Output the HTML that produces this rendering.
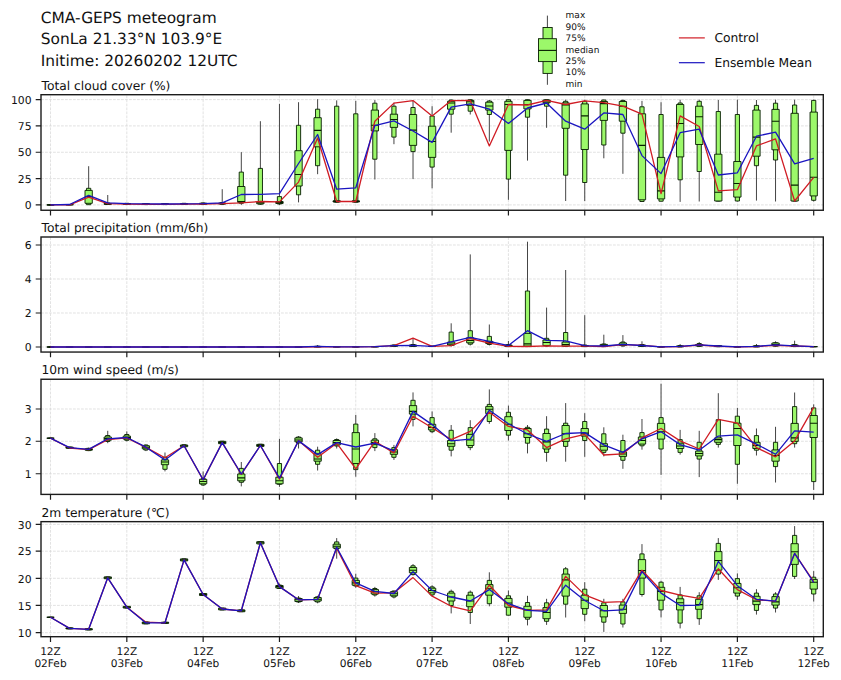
<!DOCTYPE html>
<html lang="en"><head><meta charset="utf-8"><title>CMA-GEPS meteogram</title>
<style>html,body{margin:0;padding:0;background:#fff}svg{display:block}text{font-family:"DejaVu Sans","Liberation Sans",sans-serif;fill:#111;text-rendering:geometricPrecision}.g{stroke:#d6d6d6;stroke-width:.7;stroke-dasharray:2.8 1.2;fill:none}.tk{stroke:#1c1c1c;stroke-width:1.2}.fr{fill:none;stroke:#1c1c1c;stroke-width:1.4}.w{stroke:#454545;stroke-width:1}.b{fill:#9cf86a;stroke:#061c00;stroke-width:.9}.m{stroke:#061c00;stroke-width:1.1}.r{fill:none;stroke:#d01c24;stroke-width:1.3;stroke-linejoin:round}.u{fill:none;stroke:#1a14c0;stroke-width:1.3;stroke-linejoin:round}.yt{font-size:10.8px;text-anchor:end}.xt{font-size:10.6px;text-anchor:middle}.ti{font-size:12.27px}.st{font-size:15.4px}.lg{font-size:12.3px}.bl{font-size:9px}</style></head><body>
<svg width="841" height="680" viewBox="0 0 841 680">
<rect width="841" height="680" fill="#fff"/>
<text class="st" x="40.8" y="23">CMA-GEPS meteogram</text>
<text class="st" x="40.8" y="44">SonLa 21.33°N 103.9°E</text>
<text class="st" x="40.8" y="65.5">Initime: 20260202 12UTC</text>
<line class="w" x1="547.4" y1="15.6" x2="547.4" y2="84.8"/>
<rect class="b" x="543" y="27.5" width="9.2" height="45.9"/>
<rect class="b" x="538.5" y="38.7" width="17.9" height="22.9"/>
<line class="m" x1="538.5" y1="50.4" x2="556.4" y2="50.4"/>
<text class="bl" x="565.6" y="18.3">max</text>
<text class="bl" x="565.6" y="29.72">90%</text>
<text class="bl" x="565.6" y="41.14">75%</text>
<text class="bl" x="565.6" y="52.56">median</text>
<text class="bl" x="565.6" y="63.98">25%</text>
<text class="bl" x="565.6" y="75.4">10%</text>
<text class="bl" x="565.6" y="86.82">min</text>
<line x1="678.9" y1="37.9" x2="704.8" y2="37.9" stroke="#d01c24" stroke-width="1.2"/>
<line x1="678.9" y1="62.7" x2="704.8" y2="62.7" stroke="#1a14c0" stroke-width="1.2"/>
<text class="lg" x="714.4" y="42.2">Control</text>
<text class="lg" x="714.4" y="67">Ensemble Mean</text>
<g>
<text class="ti" x="41.5" y="89.8">Total cloud cover (%)</text>
<path class="g" d="M50.5 210.25V94.7M126.82 210.25V94.7M203.14 210.25V94.7M279.46 210.25V94.7M355.78 210.25V94.7M432.1 210.25V94.7M508.42 210.25V94.7M584.74 210.25V94.7M661.06 210.25V94.7M737.38 210.25V94.7M813.7 210.25V94.7M41 204.9H823.3M41 178.6H823.3M41 152.25H823.3M41 125.9H823.3M41 99.6H823.3"/>
<path class="w" d="M50.5 204.9V204.9M69.58 204.5V204.9M88.66 166.2V204.9M107.74 195V204.9M126.82 203V204.6M145.9 203.3V204.8M164.98 203.3V204.8M184.06 203V204.6M203.14 202.6V204.6M222.22 189.2V204.7M241.3 152.1V204.9M260.38 121.2V204.9M279.46 103.9V204.9M298.54 102.2V202.4M317.62 99.2V174.2M336.7 100.4V202.4M355.78 100.9V202.4M374.86 100.1V179.5M393.94 102.7V144.2M413.02 101V179.1M432.1 106.2V188.3M451.18 99.7V132.7M470.26 99.6V114.5M489.34 100V141.5M508.42 99.6V199.8M527.5 99.6V160.6M546.58 99.6V127.8M565.66 99.7V201M584.74 99.7V201M603.82 99.7V158.3M622.9 99.7V173.8M641.98 100.9V201.6M661.06 102.2V201.5M680.14 99.7V201.9M699.22 99.7V201.5M718.3 100V201.2M737.38 99.7V201.5M756.46 100V200.6M775.54 99.7V201.5M794.62 99.7V201.3M813.7 99.7V201.5"/>
<path class="b" d="M48.4 204.9H52.6V204.9H48.4ZM67.48 204.5H71.68V204.9H67.48ZM86.56 188.3H90.76V204.7H86.56ZM105.64 203H109.84V204.5H105.64ZM124.72 203.3H128.92V204.4H124.72ZM143.8 203.6H148V204.6H143.8ZM162.88 203.6H167.08V204.6H162.88ZM181.96 203.3H186.16V204.4H181.96ZM201.04 203H205.24V204.4H201.04ZM220.12 202.6H224.32V204.3H220.12ZM239.2 172.1H243.4V203.3H239.2ZM258.28 168.4H262.48V204.2H258.28ZM277.36 196.6H281.56V204H277.36ZM296.44 125.3H300.64V194.8H296.44ZM315.52 109.2H319.72V165.7H315.52ZM334.6 106.2H338.8V202.2H334.6ZM353.68 113.8H357.88V202.2H353.68ZM372.76 103.2H376.96V159.2H372.76ZM391.84 106.2H396.04V137.1H391.84ZM410.92 107.5H415.12V151.6H410.92ZM430 116H434.2V167.1H430ZM449.08 100H453.28V114.2H449.08ZM468.16 99.7H472.36V111.2H468.16ZM487.24 101H491.44V114.5H487.24ZM506.32 99.7H510.52V179.1H506.32ZM525.4 99.7H529.6V117.2H525.4ZM544.48 99.7H548.68V106.2H544.48ZM563.56 101.3H567.76V175.2H563.56ZM582.64 101.3H586.84V182.5H582.64ZM601.72 100H605.92V145H601.72ZM620.8 100.4H625V133.2H620.8ZM639.88 106.8H644.08V201.5H639.88ZM658.96 114.5H663.16V201.2H658.96ZM678.04 103H682.24V179.8H678.04ZM697.12 101.3H701.32V171.5H697.12ZM716.2 111.5H720.4V201.1H716.2ZM735.28 114.5H739.48V201H735.28ZM754.36 105.4H758.56V165.7H754.36ZM773.44 103.2H777.64V160H773.44ZM792.52 105H796.72V201.1H792.52ZM811.6 100.4H815.8V200.3H811.6Z"/>
<path class="b" d="M46.85 204.9H54.15V204.9H46.85ZM65.93 204.5H73.23V204.9H65.93ZM85.01 190.4H92.31V203.3H85.01ZM104.09 203.4H111.39V204.3H104.09ZM123.17 203.5H130.47V204.3H123.17ZM142.25 203.8H149.55V204.5H142.25ZM161.33 203.8H168.63V204.5H161.33ZM180.41 203.5H187.71V204.3H180.41ZM199.49 203.2H206.79V204.2H199.49ZM218.57 203H225.87V204H218.57ZM237.65 186.5H244.95V202.4H237.65ZM256.73 201.9H264.03V203.8H256.73ZM275.81 201.5H283.11V203.5H275.81ZM294.89 150.7H302.19V186H294.89ZM313.97 117.7H321.27V146.8H313.97ZM333.05 200.8H340.35V202H333.05ZM352.13 200.8H359.43V202H352.13ZM371.21 110.1H378.51V130.9H371.21ZM390.29 114.2H397.59V127.4H390.29ZM409.37 114.5H416.67V145.4H409.37ZM428.45 126.2H435.75V157.4H428.45ZM447.53 101.3H454.83V109.2H447.53ZM466.61 100.4H473.91V105.4H466.61ZM485.69 102.2H492.99V110.1H485.69ZM504.77 101.3H512.07V150.4H504.77ZM523.85 100.4H531.15V108.9H523.85ZM542.93 100H550.23V102.7H542.93ZM562.01 102.9H569.31V128.3H562.01ZM581.09 103.9H588.39V149.5H581.09ZM600.17 101.5H607.47V120.4H600.17ZM619.25 101.5H626.55V121.2H619.25ZM638.33 113.8H645.63V199.8H638.33ZM657.41 157.4H664.71V198.9H657.41ZM676.49 104.5H683.79V156.9H676.49ZM695.57 106.2H702.87V144.5H695.57ZM714.65 154.2H721.95V201H714.65ZM733.73 161.5H741.03V197.1H733.73ZM752.81 110.1H760.11V156.2H752.81ZM771.89 109.4H779.19V149.8H771.89ZM790.97 113.3H798.27V201H790.97ZM810.05 112.1H817.35V195.9H810.05Z"/>
<path class="m" d="M46.85 204.9H54.15M65.93 204.7H73.23M85.01 196.5H92.31M104.09 203.9H111.39M123.17 203.9H130.47M142.25 204.1H149.55M161.33 204.1H168.63M180.41 203.9H187.71M199.49 203.7H206.79M218.57 203.5H225.87M237.65 201.5H244.95M256.73 202.8H264.03M275.81 202.5H283.11M294.89 174.5H302.19M313.97 130.4H321.27M333.05 201.4H340.35M352.13 201.4H359.43M371.21 125.3H378.51M390.29 119.5H397.59M409.37 130.1H416.67M428.45 141.5H435.75M447.53 103H454.83M466.61 101.8H473.91M485.69 106H492.99M504.77 104.5H512.07M523.85 104.5H531.15M542.93 101H550.23M562.01 104.9H569.31M581.09 115.9H588.39M600.17 103.6H607.47M619.25 106.2H626.55M638.33 145.4H645.63M657.41 190.9H664.71M676.49 123.5H683.79M695.57 116.8H702.87M714.65 192.2H721.95M733.73 183.5H741.03M752.81 137.1H760.11M771.89 121.2H779.19M790.97 185.1H798.27M810.05 177.3H817.35"/>
<polyline class="r" points="50.5,204.9 69.58,204.8 88.66,197.1 107.74,203.6 126.82,204.2 145.9,204.4 164.98,204.4 184.06,204.2 203.14,204 222.22,203.6 241.3,202.8 260.38,201.5 279.46,201.9 298.54,182.1 317.62,138 336.7,201.5 355.78,201.5 374.86,121.2 393.94,103.1 413.02,100.6 432.1,116 451.18,100.6 470.26,100.4 489.34,145.9 508.42,104.5 527.5,105 546.58,100.4 565.66,104.5 584.74,100.9 603.82,102.7 622.9,106.2 641.98,114.2 661.06,193.6 680.14,115.9 699.22,126.5 718.3,190.9 737.38,189.7 756.46,145.9 775.54,138.9 794.62,201 813.7,177.3"/>
<polyline class="u" points="50.5,204.9 69.58,204.5 88.66,195.3 107.74,202.8 126.82,203.6 145.9,203.9 164.98,204 184.06,203.8 203.14,203.6 222.22,202.8 241.3,194.5 260.38,194.3 279.46,193.6 298.54,163.5 317.62,134.5 336.7,189.2 355.78,187.8 374.86,125.6 393.94,120.9 413.02,131 432.1,142.4 451.18,107.1 470.26,103.9 489.34,109.2 508.42,123.4 527.5,108 546.58,103 565.66,121.2 584.74,129.2 603.82,112.9 622.9,114.5 641.98,155.6 661.06,173.6 680.14,132.7 699.22,129.2 718.3,175 737.38,172.8 756.46,136.2 775.54,132.2 794.62,163.9 813.7,158.3"/>
<rect class="fr" x="41" y="94.7" width="782.3" height="115.55"/>
<path class="tk" d="M50.5 210.25v5.3M126.82 210.25v5.3M203.14 210.25v5.3M279.46 210.25v5.3M355.78 210.25v5.3M432.1 210.25v5.3M508.42 210.25v5.3M584.74 210.25v5.3M661.06 210.25v5.3M737.38 210.25v5.3M813.7 210.25v5.3M41 204.9h-5.3M41 178.6h-5.3M41 152.25h-5.3M41 125.9h-5.3M41 99.6h-5.3"/>
<text class="yt" x="31.6" y="209.1">0</text>
<text class="yt" x="31.6" y="182.8">25</text>
<text class="yt" x="31.6" y="156.45">50</text>
<text class="yt" x="31.6" y="130.1">75</text>
<text class="yt" x="31.6" y="103.8">100</text>
</g>
<g>
<text class="ti" x="41.5" y="232.1">Total precipitation (mm/6h)</text>
<path class="g" d="M50.5 352.05V237M126.82 352.05V237M203.14 352.05V237M279.46 352.05V237M355.78 352.05V237M432.1 352.05V237M508.42 352.05V237M584.74 352.05V237M661.06 352.05V237M737.38 352.05V237M813.7 352.05V237M41 347H823.3M41 313H823.3M41 279H823.3M41 245H823.3"/>
<path class="w" d="M50.5 347V347M69.58 347V347M88.66 347V347M107.74 347V347M126.82 347V347M145.9 347V347M164.98 347V347M184.06 347V347M203.14 347V347M222.22 347V347M241.3 347V347M260.38 347V347M279.46 347V347M298.54 347V347M317.62 345V347M336.7 346.8V346.8M355.78 346.8V346.8M374.86 346.7V346.7M393.94 344.5V346.6M413.02 338.5V346.6M432.1 346.4V346.4M451.18 323.3V346.5M470.26 254.4V345.5M489.34 324.5V345.5M508.42 340.9V346.8M527.5 241.7V346.5M546.58 307.6V346.5M565.66 270V346.5M584.74 315.2V346.8M603.82 334.7V346.8M622.9 335.1V346.5M641.98 341.3V346.6M661.06 346.8V346.8M680.14 344.1V347M699.22 342.1V346.6M718.3 345V346.9M737.38 346.8V346.8M756.46 344V347M775.54 341.3V346.6M794.62 340.7V346.8M813.7 346.6V346.6"/>
<path class="b" d="M48.4 347H52.6V347H48.4ZM67.48 347H71.68V347H67.48ZM86.56 347H90.76V347H86.56ZM105.64 347H109.84V347H105.64ZM124.72 347H128.92V347H124.72ZM143.8 347H148V347H143.8ZM162.88 347H167.08V347H162.88ZM181.96 347H186.16V347H181.96ZM201.04 347H205.24V347H201.04ZM220.12 347H224.32V347H220.12ZM239.2 347H243.4V347H239.2ZM258.28 347H262.48V347H258.28ZM277.36 347H281.56V347H277.36ZM296.44 347H300.64V347H296.44ZM315.52 346.2H319.72V346.9H315.52ZM334.6 346.8H338.8V346.8H334.6ZM353.68 346.8H357.88V346.8H353.68ZM372.76 346.7H376.96V346.7H372.76ZM391.84 345H396.04V346.4H391.84ZM410.92 344.5H415.12V346.4H410.92ZM430 346.4H434.2V346.4H430ZM449.08 332.1H453.28V345.5H449.08ZM468.16 330.7H472.36V344.2H468.16ZM487.24 336.4H491.44V344.5H487.24ZM506.32 344.6H510.52V346.6H506.32ZM525.4 291H529.6V346.3H525.4ZM544.48 338.3H548.68V346H544.48ZM563.56 332.5H567.76V346.3H563.56ZM582.64 345H586.84V346.6H582.64ZM601.72 344H605.92V346.6H601.72ZM620.8 342H625V346H620.8ZM639.88 344.6H644.08V346.4H639.88ZM658.96 346.8H663.16V346.8H658.96ZM678.04 345.7H682.24V346.9H678.04ZM697.12 343.5H701.32V346.3H697.12ZM716.2 345.6H720.4V346.7H716.2ZM735.28 346.8H739.48V346.8H735.28ZM754.36 345.7H758.56V346.9H754.36ZM773.44 342.7H777.64V346.2H773.44ZM792.52 344.6H796.72V346.6H792.52ZM811.6 346.6H815.8V346.6H811.6Z"/>
<path class="b" d="M46.85 347H54.15V347H46.85ZM65.93 347H73.23V347H65.93ZM85.01 347H92.31V347H85.01ZM104.09 347H111.39V347H104.09ZM123.17 347H130.47V347H123.17ZM142.25 347H149.55V347H142.25ZM161.33 347H168.63V347H161.33ZM180.41 347H187.71V347H180.41ZM199.49 347H206.79V347H199.49ZM218.57 347H225.87V347H218.57ZM237.65 347H244.95V347H237.65ZM256.73 347H264.03V347H256.73ZM275.81 347H283.11V347H275.81ZM294.89 347H302.19V347H294.89ZM313.97 346.4H321.27V346.8H313.97ZM333.05 346.8H340.35V346.8H333.05ZM352.13 346.8H359.43V346.8H352.13ZM371.21 346.7H378.51V346.7H371.21ZM390.29 345.3H397.59V346.3H390.29ZM409.37 345H416.67V346.3H409.37ZM428.45 346.4H435.75V346.4H428.45ZM447.53 342.1H454.83V345H447.53ZM466.61 337.8H473.91V342.8H466.61ZM485.69 341.4H492.99V343.5H485.69ZM504.77 345H512.07V346.5H504.77ZM523.85 333.4H531.15V346.1H523.85ZM542.93 340H550.23V345.6H542.93ZM562.01 342.1H569.31V346.1H562.01ZM581.09 345.5H588.39V346.5H581.09ZM600.17 344.4H607.47V346.5H600.17ZM619.25 343H626.55V345.5H619.25ZM638.33 345H645.63V346.3H638.33ZM657.41 346.8H664.71V346.8H657.41ZM676.49 346H683.79V346.8H676.49ZM695.57 344.5H702.87V346H695.57ZM714.65 345.8H721.95V346.6H714.65ZM733.73 346.8H741.03V346.8H733.73ZM752.81 346H760.11V346.8H752.81ZM771.89 343H779.19V345.8H771.89ZM790.97 345H798.27V346.5H790.97ZM810.05 346.6H817.35V346.6H810.05Z"/>
<path class="m" d="M46.85 347H54.15M65.93 347H73.23M85.01 347H92.31M104.09 347H111.39M123.17 347H130.47M142.25 347H149.55M161.33 347H168.63M180.41 347H187.71M199.49 347H206.79M218.57 347H225.87M237.65 347H244.95M256.73 347H264.03M275.81 347H283.11M294.89 347H302.19M313.97 346.6H321.27M333.05 346.8H340.35M352.13 346.8H359.43M371.21 346.7H378.51M390.29 345.8H397.59M409.37 345.6H416.67M428.45 346.4H435.75M447.53 344H454.83M466.61 340.5H473.91M485.69 342.5H492.99M504.77 345.8H512.07M523.85 343.9H531.15M542.93 342.5H550.23M562.01 344.5H569.31M581.09 346H588.39M600.17 345.5H607.47M619.25 344.5H626.55M638.33 345.7H645.63M657.41 346.8H664.71M676.49 346.4H683.79M695.57 345.3H702.87M714.65 346.2H721.95M733.73 346.8H741.03M752.81 346.4H760.11M771.89 344.5H779.19M790.97 345.8H798.27M810.05 346.6H817.35"/>
<polyline class="r" points="50.5,347 69.58,347 88.66,347 107.74,347 126.82,347 145.9,347 164.98,347 184.06,347 203.14,347 222.22,347 241.3,347 260.38,347 279.46,347 298.54,347 317.62,346.8 336.7,346.8 355.78,346.8 374.86,346.7 393.94,345.7 413.02,338.1 432.1,346.4 451.18,345.7 470.26,338.5 489.34,343.2 508.42,346.3 527.5,346.5 546.58,345.8 565.66,346.1 584.74,346.1 603.82,346.5 622.9,344.6 641.98,345.3 661.06,346.8 680.14,346.6 699.22,345 718.3,346.3 737.38,346.8 756.46,346.6 775.54,345.3 794.62,346 813.7,346.6"/>
<polyline class="u" points="50.5,347 69.58,347 88.66,347 107.74,347 126.82,347 145.9,347 164.98,347 184.06,347 203.14,347 222.22,347 241.3,347 260.38,347 279.46,347 298.54,347 317.62,346.3 336.7,346.8 355.78,346.8 374.86,346.7 393.94,345.7 413.02,345.4 432.1,346.4 451.18,341.8 470.26,337.4 489.34,341.4 508.42,345.6 527.5,330.7 546.58,340.4 565.66,340.9 584.74,345.6 603.82,346 622.9,344.4 641.98,345.5 661.06,346.8 680.14,346.3 699.22,344.9 718.3,346 737.38,346.8 756.46,346.3 775.54,344.9 794.62,345.8 813.7,346.6"/>
<rect class="fr" x="41" y="237" width="782.3" height="115.05"/>
<path class="tk" d="M50.5 352.05v5.3M126.82 352.05v5.3M203.14 352.05v5.3M279.46 352.05v5.3M355.78 352.05v5.3M432.1 352.05v5.3M508.42 352.05v5.3M584.74 352.05v5.3M661.06 352.05v5.3M737.38 352.05v5.3M813.7 352.05v5.3M41 347h-5.3M41 313h-5.3M41 279h-5.3M41 245h-5.3"/>
<text class="yt" x="31.6" y="351.2">0</text>
<text class="yt" x="31.6" y="317.2">2</text>
<text class="yt" x="31.6" y="283.2">4</text>
<text class="yt" x="31.6" y="249.2">6</text>
</g>
<g>
<text class="ti" x="41.5" y="374.35">10m wind speed (m/s)</text>
<path class="g" d="M50.5 494.4V379.25M126.82 494.4V379.25M203.14 494.4V379.25M279.46 494.4V379.25M355.78 494.4V379.25M432.1 494.4V379.25M508.42 494.4V379.25M584.74 494.4V379.25M661.06 494.4V379.25M737.38 494.4V379.25M813.7 494.4V379.25M41 473.75H823.3M41 441.25H823.3M41 409H823.3"/>
<path class="w" d="M50.5 438.2V438.2M69.58 447V448.4M88.66 447.6V451.1M107.74 430.8V443.2M126.82 431.4V441.4M145.9 444.4V451.1M164.98 452.5V471.4M184.06 444.5V447.2M203.14 471.4V485.9M222.22 441V444M241.3 462V486.4M260.38 444V446.8M279.46 438.8V486.8M298.54 436.1V448.5M317.62 446.7V470.5M336.7 438.4V448.5M355.78 414.9V476.7M374.86 433.1V451.1M393.94 444.9V459.9M413.02 392.4V426.4M432.1 411.4V433.1M451.18 425V456.4M470.26 420.2V450.2M489.34 389.4V423.8M508.42 405.6V440.5M527.5 425V453.4M546.58 416.2V461.7M565.66 403.1V461.7M584.74 413.2V456.8M603.82 427.3V456.4M622.9 434.7V468.8M641.98 419V449.7M661.06 383.7V474.9M680.14 429.9V454.6M699.22 430.8V477.1M718.3 393.2V447.6M737.38 407.9V483.8M756.46 428.5V455.5M775.54 426.8V482.5M794.62 392.5V447.6M813.7 404.4V489.9"/>
<path class="b" d="M48.4 438.2H52.6V438.2H48.4ZM67.48 447H71.68V448.3H67.48ZM86.56 448.3H90.76V450.6H86.56ZM105.64 435.5H109.84V441.5H105.64ZM124.72 434.5H128.92V440.3H124.72ZM143.8 445H148V450H143.8ZM162.88 457.3H167.08V469.3H162.88ZM181.96 444.8H186.16V446.9H181.96ZM201.04 478.5H205.24V485H201.04ZM220.12 441.2H224.32V443.9H220.12ZM239.2 468.4H243.4V482.3H239.2ZM258.28 444.2H262.48V446.6H258.28ZM277.36 463.5H281.56V484.3H277.36ZM296.44 437H300.64V443H296.44ZM315.52 450.2H319.72V464.3H315.52ZM334.6 439.5H338.8V446H334.6ZM353.68 424.1H357.88V469.6H353.68ZM372.76 438.8H376.96V447.6H372.76ZM391.84 447.6H396.04V457.3H391.84ZM410.92 400.3H415.12V419.4H410.92ZM430 417.6H434.2V431.7H430ZM449.08 430.3H453.28V450.2H449.08ZM468.16 427.6H472.36V447.6H468.16ZM487.24 404.4H491.44V421.5H487.24ZM506.32 412.3H510.52V435.2H506.32ZM525.4 427.3H529.6V443.2H525.4ZM544.48 429.1H548.68V452.4H544.48ZM563.56 423.2H567.76V446.4H563.56ZM582.64 421.5H586.84V440.5H582.64ZM601.72 433.8H605.92V452.4H601.72ZM620.8 440.5H625V460.3H620.8ZM639.88 432.6H644.08V445.8H639.88ZM658.96 417.6H663.16V449H658.96ZM678.04 439.6H682.24V452.4H678.04ZM697.12 442.3H701.32V459.1H697.12ZM716.2 419.7H720.4V444.4H716.2ZM735.28 416.2H739.48V464.3H735.28ZM754.36 435.6H758.56V450.2H754.36ZM773.44 442.3H777.64V466.6H773.44ZM792.52 406.6H796.72V443.7H792.52ZM811.6 407.9H815.8V481.6H811.6Z"/>
<path class="b" d="M46.85 438.2H54.15V438.2H46.85ZM65.93 447.1H73.23V448.2H65.93ZM85.01 448.7H92.31V450.2H85.01ZM104.09 437H111.39V440.2H104.09ZM123.17 436.1H130.47V439.1H123.17ZM142.25 445.8H149.55V448.8H142.25ZM161.33 459.9H168.63V464.7H161.33ZM180.41 445H187.71V446.7H180.41ZM199.49 479.3H206.79V483.8H199.49ZM218.57 441.4H225.87V443.7H218.57ZM237.65 474H244.95V480.8H237.65ZM256.73 444.4H264.03V446.4H256.73ZM275.81 477.2H283.11V483.8H275.81ZM294.89 437.9H302.19V441.8H294.89ZM313.97 453.8H321.27V461.2H313.97ZM333.05 440.5H340.35V444.9H333.05ZM352.13 432.6H359.43V463.5H352.13ZM371.21 440.2H378.51V444.6H371.21ZM390.29 449.7H397.59V454.3H390.29ZM409.37 405.6H416.67V414.1H409.37ZM428.45 424.3H435.75V429.9H428.45ZM447.53 440.5H454.83V446.3H447.53ZM466.61 434.4H473.91V445.5H466.61ZM485.69 406.6H492.99V413.5H485.69ZM504.77 416.7H512.07V430.5H504.77ZM523.85 428.5H531.15V437.5H523.85ZM542.93 433.5H550.23V449H542.93ZM562.01 425.5H569.31V441.4H562.01ZM581.09 428.5H588.39V436.1H581.09ZM600.17 443.7H607.47V450.2H600.17ZM619.25 452H626.55V456.4H619.25ZM638.33 437H645.63V444.1H638.33ZM657.41 423.4H664.71V439.1H657.41ZM676.49 443.2H683.79V448.5H676.49ZM695.57 451.1H702.87V455.9H695.57ZM714.65 437.9H721.95V442.3H714.65ZM733.73 423.2H741.03V445.5H733.73ZM752.81 442.3H760.11V448.5H752.81ZM771.89 449.9H779.19V461.2H771.89ZM790.97 423.4H798.27V441.4H790.97ZM810.05 415.5H817.35V437.5H810.05Z"/>
<path class="m" d="M46.85 438.2H54.15M65.93 447.6H73.23M85.01 449.5H92.31M104.09 438.6H111.39M123.17 437.6H130.47M142.25 447.3H149.55M161.33 462H168.63M180.41 445.8H187.71M199.49 481.5H206.79M218.57 442.6H225.87M237.65 477.9H244.95M256.73 445.4H264.03M275.81 480.8H283.11M294.89 440H302.19M313.97 459H321.27M333.05 442.5H340.35M352.13 449H359.43M371.21 442.5H378.51M390.29 452H397.59M409.37 411.4H416.67M428.45 427.5H435.75M447.53 443.7H454.83M466.61 440H473.91M485.69 409.3H492.99M504.77 424.3H512.07M523.85 433.8H531.15M542.93 441.9H550.23M562.01 433.8H569.31M581.09 433.1H588.39M600.17 446.2H607.47M619.25 454H626.55M638.33 440.5H645.63M657.41 431.7H664.71M676.49 446H683.79M695.57 453.5H702.87M714.65 439.6H721.95M733.73 428.5H741.03M752.81 445.5H760.11M771.89 455.5H779.19M790.97 437.9H798.27M810.05 423.2H817.35"/>
<polyline class="r" points="50.5,438.2 69.58,448 88.66,449.6 107.74,439.6 126.82,437.8 145.9,447.4 164.98,457.8 184.06,445.8 203.14,479.9 222.22,442.6 241.3,474.4 260.38,445.5 279.46,479.3 298.54,440.5 317.62,457.3 336.7,443.2 355.78,468.8 374.86,441.4 393.94,452.9 413.02,416.2 432.1,427.8 451.18,439.6 470.26,431.4 489.34,412.3 508.42,426.4 527.5,429.9 546.58,447.6 565.66,438.8 584.74,434.4 603.82,455 622.9,453.8 641.98,437.9 661.06,428.5 680.14,440.9 699.22,449 718.3,419.4 737.38,423.2 756.46,447.6 775.54,456.8 794.62,440.9 813.7,407.4"/>
<polyline class="u" points="50.5,438.2 69.58,447.6 88.66,449.4 107.74,438.8 126.82,437.5 145.9,447.2 164.98,459.9 184.06,445.8 203.14,479.7 222.22,442.6 241.3,474 260.38,445.5 279.46,478.1 298.54,440.9 317.62,454.6 336.7,442.6 355.78,447 374.86,443.2 393.94,450.8 413.02,411.4 432.1,424.6 451.18,440.9 470.26,439.1 489.34,410.2 508.42,423.8 527.5,434 546.58,441.4 565.66,433.5 584.74,432.6 603.82,444.9 622.9,452.4 641.98,438.8 661.06,431.7 680.14,444.6 699.22,450.2 718.3,436.1 737.38,434.9 756.46,444.1 775.54,454.3 794.62,430.8 813.7,432.2"/>
<rect class="fr" x="41" y="379.25" width="782.3" height="115.15"/>
<path class="tk" d="M50.5 494.4v5.3M126.82 494.4v5.3M203.14 494.4v5.3M279.46 494.4v5.3M355.78 494.4v5.3M432.1 494.4v5.3M508.42 494.4v5.3M584.74 494.4v5.3M661.06 494.4v5.3M737.38 494.4v5.3M813.7 494.4v5.3M41 473.75h-5.3M41 441.25h-5.3M41 409h-5.3"/>
<text class="yt" x="31.6" y="477.95">1</text>
<text class="yt" x="31.6" y="445.45">2</text>
<text class="yt" x="31.6" y="413.2">3</text>
</g>
<g>
<text class="ti" x="41.5" y="516.75">2m temperature (℃)</text>
<path class="g" d="M50.5 636.7V521.65M126.82 636.7V521.65M203.14 636.7V521.65M279.46 636.7V521.65M355.78 636.7V521.65M432.1 636.7V521.65M508.42 636.7V521.65M584.74 636.7V521.65M661.06 636.7V521.65M737.38 636.7V521.65M813.7 636.7V521.65M41 632.7H823.3M41 605.4H823.3M41 578.3H823.3M41 551.2H823.3M41 524.4H823.3"/>
<path class="w" d="M50.5 617.3V617.3M69.58 627.9V628.9M88.66 628.7V629.9M107.74 576.9V578.7M126.82 606.4V608M145.9 622V623.8M164.98 622.2V623.4M184.06 558.9V560.9M203.14 593.5V595.5M222.22 608.1V609.9M241.3 609.9V611.7M260.38 541.7V543.9M279.46 583.5V589M298.54 596V603M317.62 595.8V603.3M336.7 538.1V558.7M355.78 573.7V587.8M374.86 586.9V596.6M393.94 590.5V598.4M413.02 564V575.5M432.1 585.2V596.6M451.18 589.6V613.4M470.26 590.5V624M489.34 572.3V606.3M508.42 590.5V615.4M527.5 595.8V625.4M546.58 598.8V624.9M565.66 567V617.5M584.74 582.2V621.3M603.82 598.8V631.9M622.9 598.8V627.5M641.98 544.1V596.6M661.06 580.8V617.5M680.14 586.9V628.4M699.22 592.2V624.9M718.3 538.1V579.9M737.38 573.4V599.8M756.46 589.2V614.6M775.54 592.2V612.5M794.62 526.1V579M813.7 571.1V601.6"/>
<path class="b" d="M48.4 617.3H52.6V617.3H48.4ZM67.48 627.9H71.68V628.9H67.48ZM86.56 628.7H90.76V629.9H86.56ZM105.64 576.9H109.84V578.7H105.64ZM124.72 606.4H128.92V608H124.72ZM143.8 622H148V623.8H143.8ZM162.88 622.2H167.08V623.4H162.88ZM181.96 558.9H186.16V560.9H181.96ZM201.04 593.5H205.24V595.5H201.04ZM220.12 608.1H224.32V609.9H220.12ZM239.2 609.9H243.4V611.7H239.2ZM258.28 541.7H262.48V543.9H258.28ZM277.36 585H281.56V588.5H277.36ZM296.44 598H300.64V602H296.44ZM315.52 596.8H319.72V602H315.52ZM334.6 541.9H338.8V549H334.6ZM353.68 578.1H357.88V586H353.68ZM372.76 588.5H376.96V595H372.76ZM391.84 591H396.04V597H391.84ZM410.92 565.8H415.12V574.6H410.92ZM430 586.9H434.2V594.9H430ZM449.08 591.3H453.28V605.5H449.08ZM468.16 592.2H472.36V612.5H468.16ZM487.24 580.4H491.44V603.7H487.24ZM506.32 595.8H510.52V615.2H506.32ZM525.4 602.5H529.6V619.2H525.4ZM544.48 602.8H548.68V621.3H544.48ZM563.56 568.8H567.76V604.2H563.56ZM582.64 589.2H586.84V614.3H582.64ZM601.72 602.8H605.92V622.2H601.72ZM620.8 601.9H625V624H620.8ZM639.88 553.9H644.08V594.5H639.88ZM658.96 582.2H663.16V609.9H658.96ZM678.04 594.9H682.24V623.1H678.04ZM697.12 595.8H701.32V618.7H697.12ZM716.2 543.4H720.4V574.1H716.2ZM735.28 578.6H739.48V596.1H735.28ZM754.36 593.1H758.56V610.4H754.36ZM773.44 594H777.64V608.1H773.44ZM792.52 535.4H796.72V576.4H792.52ZM811.6 577.2H815.8V594H811.6Z"/>
<path class="b" d="M46.85 617.3H54.15V617.3H46.85ZM65.93 627.9H73.23V628.9H65.93ZM85.01 628.7H92.31V629.9H85.01ZM104.09 576.9H111.39V578.7H104.09ZM123.17 606.4H130.47V608H123.17ZM142.25 622H149.55V623.8H142.25ZM161.33 622.2H168.63V623.4H161.33ZM180.41 558.9H187.71V560.9H180.41ZM199.49 593.5H206.79V595.5H199.49ZM218.57 608.1H225.87V609.9H218.57ZM237.65 609.9H244.95V611.7H237.65ZM256.73 541.7H264.03V543.9H256.73ZM275.81 585.5H283.11V588H275.81ZM294.89 598.5H302.19V601.5H294.89ZM313.97 597.5H321.27V601H313.97ZM333.05 544.2H340.35V548.1H333.05ZM352.13 580.4H359.43V585.2H352.13ZM371.21 589.6H378.51V594H371.21ZM390.29 591.7H397.59V595.8H390.29ZM409.37 567.5H416.67V572.8H409.37ZM428.45 588.2H435.75V592.8H428.45ZM447.53 593.1H454.83V601H447.53ZM466.61 595.2H473.91V606.7H466.61ZM485.69 584.6H492.99V595.2H485.69ZM504.77 598.4H512.07V607.2H504.77ZM523.85 606.3H531.15V617.3H523.85ZM542.93 607.6H550.23V618.7H542.93ZM562.01 574.1H569.31V596.1H562.01ZM581.09 595.2H588.39V608.6H581.09ZM600.17 605.5H607.47V616.9H600.17ZM619.25 605.1H626.55V613.4H619.25ZM638.33 559.6H645.63V578.1H638.33ZM657.41 587.3H664.71V600.2H657.41ZM676.49 598.8H683.79V609.9H676.49ZM695.57 599.3H702.87V609.3H695.57ZM714.65 551.6H721.95V570.2H714.65ZM733.73 583.4H741.03V593.1H733.73ZM752.81 596.3H760.11V604.6H752.81ZM771.89 596.6H779.19V605.1H771.89ZM790.97 543.7H798.27V564.4H790.97ZM810.05 579.4H817.35V589.1H810.05Z"/>
<path class="m" d="M46.85 617.3H54.15M65.93 628.4H73.23M85.01 629.3H92.31M104.09 577.8H111.39M123.17 607.2H130.47M142.25 622.9H149.55M161.33 622.8H168.63M180.41 559.9H187.71M199.49 594.5H206.79M218.57 609H225.87M237.65 610.8H244.95M256.73 542.8H264.03M275.81 586.6H283.11M294.89 599.8H302.19M313.97 599.3H321.27M333.05 546.3H340.35M352.13 582.9H359.43M371.21 591.8H378.51M390.29 593.7H397.59M409.37 570.2H416.67M428.45 590.5H435.75M447.53 597H454.83M466.61 601H473.91M485.69 588.7H492.99M504.77 603H512.07M523.85 609.9H531.15M542.93 612.5H550.23M562.01 579.9H569.31M581.09 600.2H588.39M600.17 610.8H607.47M619.25 609.3H626.55M638.33 570.5H645.63M657.41 591.4H664.71M676.49 602.8H683.79M695.57 604.6H702.87M714.65 560.5H721.95M733.73 587.8H741.03M752.81 601.1H760.11M771.89 601.9H779.19M790.97 551.7H798.27M810.05 582.2H817.35"/>
<polyline class="r" points="50.5,617.3 69.58,628.4 88.66,629.3 107.74,577.8 126.82,607.2 145.9,622.2 164.98,622.8 184.06,559.9 203.14,594.5 222.22,609 241.3,610.8 260.38,542.8 279.46,586.6 298.54,599.8 317.62,599.3 336.7,548.1 355.78,585.7 374.86,593.1 393.94,592.8 413.02,577.6 432.1,596.1 451.18,606.3 470.26,610.8 489.34,585.2 508.42,605.5 527.5,610.4 546.58,609.9 565.66,576.4 584.74,594.9 603.82,602.3 622.9,601.6 641.98,570.2 661.06,590.5 680.14,595.2 699.22,598.4 718.3,568.8 737.38,589.6 756.46,599.8 775.54,601.1 794.62,553.4 813.7,581.6"/>
<polyline class="u" points="50.5,617.3 69.58,628.4 88.66,629.3 107.74,577.8 126.82,607.2 145.9,622.9 164.98,622.8 184.06,559.9 203.14,594.5 222.22,609 241.3,610.8 260.38,542.8 279.46,586.6 298.54,599.8 317.62,599.3 336.7,547.2 355.78,582.9 374.86,591.4 393.94,593.5 413.02,571.6 432.1,590.5 451.18,597 470.26,601 489.34,589.6 508.42,603.7 527.5,610.4 546.58,611.3 565.66,585.2 584.74,600.5 603.82,610.8 622.9,609.9 641.98,571.6 661.06,593.1 680.14,605.5 699.22,605.1 718.3,561.4 737.38,585.7 756.46,599.3 775.54,601.1 794.62,553.4 813.7,582.5"/>
<rect class="fr" x="41" y="521.65" width="782.3" height="115.05"/>
<path class="tk" d="M50.5 636.7v5.3M126.82 636.7v5.3M203.14 636.7v5.3M279.46 636.7v5.3M355.78 636.7v5.3M432.1 636.7v5.3M508.42 636.7v5.3M584.74 636.7v5.3M661.06 636.7v5.3M737.38 636.7v5.3M813.7 636.7v5.3M41 632.7h-5.3M41 605.4h-5.3M41 578.3h-5.3M41 551.2h-5.3M41 524.4h-5.3"/>
<text class="yt" x="31.6" y="636.9">10</text>
<text class="yt" x="31.6" y="609.6">15</text>
<text class="yt" x="31.6" y="582.5">20</text>
<text class="yt" x="31.6" y="555.4">25</text>
<text class="yt" x="31.6" y="528.6">30</text>
<text class="xt" x="50.5" y="654.7">12Z</text><text class="xt" x="50.5" y="666.5">02Feb</text>
<text class="xt" x="126.82" y="654.7">12Z</text><text class="xt" x="126.82" y="666.5">03Feb</text>
<text class="xt" x="203.14" y="654.7">12Z</text><text class="xt" x="203.14" y="666.5">04Feb</text>
<text class="xt" x="279.46" y="654.7">12Z</text><text class="xt" x="279.46" y="666.5">05Feb</text>
<text class="xt" x="355.78" y="654.7">12Z</text><text class="xt" x="355.78" y="666.5">06Feb</text>
<text class="xt" x="432.1" y="654.7">12Z</text><text class="xt" x="432.1" y="666.5">07Feb</text>
<text class="xt" x="508.42" y="654.7">12Z</text><text class="xt" x="508.42" y="666.5">08Feb</text>
<text class="xt" x="584.74" y="654.7">12Z</text><text class="xt" x="584.74" y="666.5">09Feb</text>
<text class="xt" x="661.06" y="654.7">12Z</text><text class="xt" x="661.06" y="666.5">10Feb</text>
<text class="xt" x="737.38" y="654.7">12Z</text><text class="xt" x="737.38" y="666.5">11Feb</text>
<text class="xt" x="813.7" y="654.7">12Z</text><text class="xt" x="813.7" y="666.5">12Feb</text>
</g>
</svg></body></html>
